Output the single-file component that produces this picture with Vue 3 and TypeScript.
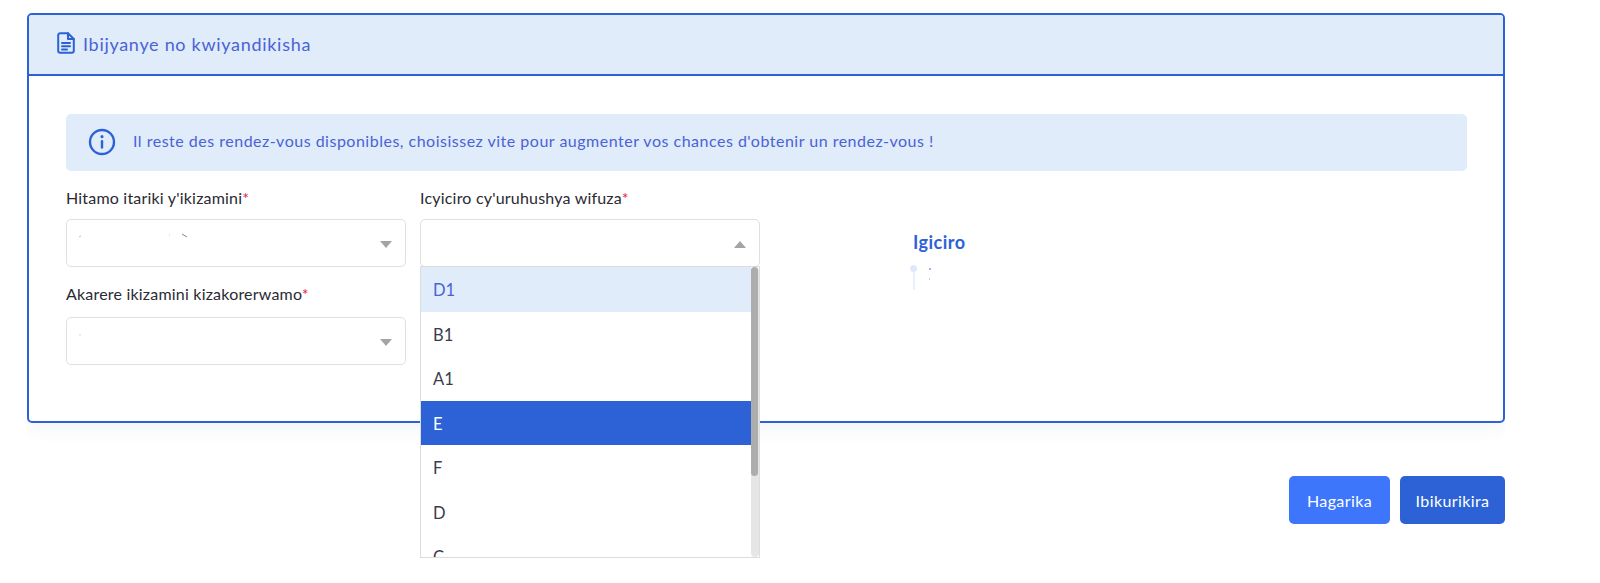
<script setup lang="ts">
const options = ['D1', 'B1', 'A1', 'E', 'F', 'D', 'C']
</script>

<template>
  <div class="page">
    <section class="card">
      <header class="card-head">
        <svg class="doc" viewBox="0 0 18 22" width="18" height="22" fill="none" stroke="#2c62d6" stroke-width="2" stroke-linejoin="round" stroke-linecap="round">
          <path d="M11 1.2H3.2a2 2 0 0 0-2 2v15.6a2 2 0 0 0 2 2h11.6a2 2 0 0 0 2-2V7z" />
          <path d="M11 1.2V7h5.8" />
          <path d="M5 11h8M5 14.2h8M5 17.4h5" stroke-width="2" />
        </svg>
        <span class="head-text">Ibijyanye no kwiyandikisha</span>
      </header>
      <div class="card-body">
        <div class="alert">
          <svg viewBox="0 0 28 28" width="28" height="28" fill="none" stroke="#2c62d6" stroke-width="2.4" stroke-linecap="round">
            <circle cx="14" cy="14" r="12" />
            <path d="M14 13.2v6.4" />
            <path d="M14 8.6v.2" stroke-width="3" />
          </svg>
          <span class="alert-text">Il reste des rendez-vous disponibles, choisissez vite pour augmenter vos chances d'obtenir un rendez-vous !</span>
        </div>
        <div class="columns">
          <div class="col">
            <label class="label">Hitamo itariki y'ikizamini<i>*</i></label>
            <div class="select">
              <svg class="smudge" viewBox="0 0 120 8" width="120" height="8">
                <path d="M0 4l2-1" stroke="#d9b9a4" />
                <path d="M90 2h1" stroke="#c9ced8" />
                <path d="M103 1l5 3" stroke="#7d8794" />
              </svg>
              <span class="caret"></span>
            </div>
            <label class="label second">Akarere ikizamini kizakorerwamo<i>*</i></label>
            <div class="select">
              <svg class="smudge" viewBox="0 0 120 8" width="120" height="8">
                <path d="M0 4h2" stroke="#e6d4c4" />
              </svg>
              <span class="caret"></span>
            </div>
          </div>
          <div class="col">
            <label class="label">Icyiciro cy'uruhushya wifuza<i>*</i></label>
            <div class="select-wrap">
              <div class="select">
                <span class="caret up"></span>
              </div>
              <div class="menu">
                <ul class="list">
                  <li
                    v-for="o in options"
                    :key="o"
                    class="option"
                    :class="{ hover: o === 'D1', active: o === 'E' }"
                  >{{ o }}</li>
                </ul>
                <div class="track"><div class="thumb"></div></div>
              </div>
            </div>
          </div>
          <div class="price">
            <h3>Igiciro</h3>
            <div class="pin-row">
              <div class="pin">
                <span class="dot"></span>
                <span class="stem"></span>
              </div>
              <div class="specks">
                <span class="speck"></span>
                <span class="speck faint"></span>
              </div>
            </div>
          </div>
        </div>
      </div>
    </section>
    <div class="actions">
      <button class="btn light">Hagarika</button>
      <button class="btn dark">Ibikurikira</button>
    </div>
  </div>
</template>

<style>
html, body { margin: 0; background: #fff; }
</style>

<style scoped>
.page {
  width: 1478px;
  height: 583px;
  margin-left: 27px;
  padding-top: 13px;
  box-sizing: border-box;
  font-family: "Lato", "Open Sans", sans-serif;
  overflow: hidden;
}
.card {
  height: 410px;
  box-sizing: border-box;
  border: 2px solid #2c62d6;
  border-radius: 5px;
  box-shadow: 0 6px 18px rgba(30, 50, 90, 0.05);
  background: #fff;
}
.card-head {
  height: 61px;
  box-sizing: border-box;
  background: #e0ecf9;
  border-bottom: 2px solid #2c62d6;
  border-radius: 3px 3px 0 0;
  padding-left: 28px;
  display: flex;
  align-items: center;
  gap: 8px;
  color: #4a62d8;
  font-size: 18px;
  letter-spacing: 0.7px;
}
.head-text { margin-top: -2px; }
.doc { margin-top: -4px; }
.card-body {
  padding: 38px 36px 0 37px;
}
.alert {
  height: 57px;
  box-sizing: border-box;
  padding: 0 0 2px 22px;
  background: #e0ecf9;
  border-radius: 5px;
  display: flex;
  align-items: center;
  gap: 17px;
  color: #4a62d8;
  font-size: 16px;
  letter-spacing: 0.5px;
}
.alert-text { margin-top: -2px; }
.columns {
  display: flex;
  margin-top: 17px;
}
.col {
  width: 340px;
  margin-right: 14px;
}
.label {
  display: block;
  height: 20px;
  line-height: 20px;
  margin-bottom: 11px;
  color: #2a2a33;
  font-size: 16px;
  letter-spacing: 0.2px;
}
.label i { color: #e8203c; font-style: normal; }
.label.second { margin-top: 17px; margin-bottom: 13px; }
.select {
  position: relative;
  height: 48px;
  box-sizing: border-box;
  border: 1px solid #e0e0e0;
  border-radius: 5px;
  background: #fff;
}
.smudge {
  position: absolute;
  left: 12px;
  top: 13px;
}
.caret {
  position: absolute;
  right: 13px;
  top: 21px;
  width: 0;
  height: 0;
  border-left: 6.5px solid transparent;
  border-right: 6.5px solid transparent;
  border-top: 7px solid #a4a4a4;
}
.caret.up {
  top: 21px;
  border-top: 0;
  border-bottom: 7px solid #a4a4a4;
}
.select-wrap { position: relative; }
.menu {
  position: absolute;
  left: 0;
  right: 0;
  top: 47px;
  height: 292px;
  box-sizing: border-box;
  border: 1px solid #dcdcdc;
  background: #fff;
  display: flex;
  overflow: hidden;
  z-index: 5;
}
.list {
  flex: 1;
  margin: 0;
  padding: 0;
  list-style: none;
}
.option {
  height: 44.5px;
  line-height: 46px;
  padding-left: 12px;
  color: #3a3d4c;
  font-size: 16.5px;
}
.option.hover { background: #e0ecf9; color: #4a62d8; }
.option.active { background: #2c62d6; color: #fff; }
.track {
  width: 8px;
  background: #e6e6e6;
  border-radius: 4px;
  flex-shrink: 0;
}
.thumb {
  width: 7px;
  height: 209px;
  background: #adadad;
  border-radius: 4px;
}
.price {
  margin-left: 139px;
  padding-top: 44px;
}
.price h3 {
  margin: 0;
  height: 20px;
  line-height: 20px;
  color: #2c62d6;
  font-size: 18px;
  font-weight: 700;
  letter-spacing: 0.5px;
}
.pin-row {
  display: flex;
  margin-top: 13px;
  margin-left: -3px;
  gap: 12px;
}
.pin {
  display: flex;
  flex-direction: column;
  width: 7px;
  align-items: center;
}
.dot {
  width: 7px;
  height: 7px;
  border-radius: 50%;
  background: #dfe9fb;
}
.stem {
  width: 2px;
  height: 18px;
  background: #e9f0fc;
}
.specks {
  display: flex;
  flex-direction: column;
  gap: 8px;
  padding-top: 3px;
}
.speck {
  width: 2px;
  height: 2px;
  background: #a9b4ea;
}
.speck.faint { width: 1px; background: #c5cdf0; }
.actions {
  display: flex;
  justify-content: flex-end;
  gap: 10px;
  margin-top: 53px;
}
.btn {
  height: 48px;
  border: 0;
  border-radius: 5px;
  color: #fff;
  font-family: "Lato", sans-serif;
  font-size: 16px;
  letter-spacing: 0.4px;
}
.light { width: 101px; background: #3d76fb; }
.dark { width: 105px; background: #2c62d6; }
</style>
